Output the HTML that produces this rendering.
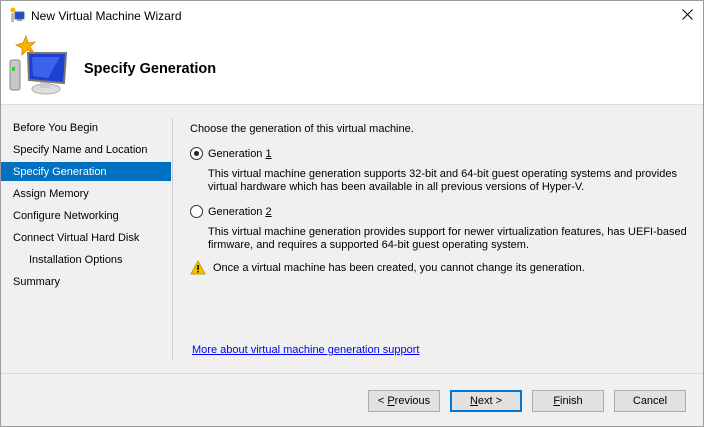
<!DOCTYPE html>
<html><head><style>
*{margin:0;padding:0;box-sizing:border-box}
body{width:704px;height:427px;overflow:hidden;background:#f0f0f0;font-family:"Liberation Sans",sans-serif;font-size:11px;color:#000;position:relative}
.frame{position:absolute;left:0;top:0;width:704px;height:427px;border:1px solid #9a9a9a;border-bottom:1px solid #9a9a9a}
.hdr{position:absolute;left:1px;top:1px;width:702px;height:104px;background:#fff;border-bottom:1px solid #dcdcdc}
.t{position:absolute;white-space:nowrap}
.nav{position:absolute;left:13px;white-space:nowrap}
.sel{position:absolute;left:1px;top:162px;width:170px;height:19px;background:#0070c0}
.vsep{position:absolute;left:172px;top:118px;width:1px;height:243px;background:#cfcfcf}
.hsep{position:absolute;left:1px;top:373px;width:702px;height:1px;background:#d8d8d8}
.btn{position:absolute;top:390px;width:72px;height:22px;background:#e1e1e1;border:1px solid #adadad;text-align:center;line-height:20px}
.radio{position:absolute;width:13px;height:13px;border:1px solid #333;border-radius:50%;background:#fff}
u{text-decoration:underline}
</style></head><body>
<div class="hdr"></div>
<div class="frame"></div>
<svg style="position:absolute;left:9px;top:7px" width="16" height="16" viewBox="0 0 16 16"><circle cx="4" cy="3" r="2.5" fill="#f5b800"/><rect x="2" y="6" width="3" height="9" fill="#bbb"/><rect x="6" y="5" width="9" height="7" fill="#1a4fd6" stroke="#555" stroke-width=".8"/><rect x="8" y="12" width="5" height="2" fill="#999"/></svg>
<div class="t" style="left:31px;top:9px;font-size:12px">New Virtual Machine Wizard</div>
<svg style="position:absolute;left:682px;top:9px" width="11" height="11" viewBox="0 0 11 11"><path d="M0.5 0.5 L10.5 10.5 M10.5 0.5 L0.5 10.5" stroke="#000" stroke-width="1"/></svg>
<svg style="position:absolute;left:8px;top:34px" width="60" height="64" viewBox="0 0 60 64">
<rect x="2" y="26" width="10" height="30" rx="2" fill="#c8c8c8" stroke="#888"/>
<rect x="4" y="33" width="3" height="4" fill="#3c3"/>
<ellipse cx="38" cy="55" rx="14" ry="5" fill="#ddd" stroke="#aaa"/>
<rect x="32" y="44" width="10" height="10" fill="#ccc"/>
<path d="M20 19 L58 19 L56 49 L21 46 Z" fill="#1f3fd0" stroke="#777" stroke-width="2"/>
<path d="M24 23 L52 23 L40 44 L25 42 Z" fill="#4f7cff" opacity=".6"/>
<path d="M18 2 L20 9 L27 8 L22 13 L26 19 L19 16 L14 21 L14 14 L8 11 L15 9 Z" fill="#f5b400" stroke="#e08000" stroke-width=".8"/>
</svg>
<div class="t" style="left:84px;top:61px;font-size:14.5px;font-weight:bold">Specify Generation</div>
<div class="sel"></div>
<div class="nav" style="top:122px">Before You Begin</div>
<div class="nav" style="top:144px">Specify Name and Location</div>
<div class="nav" style="top:166px;color:#fff">Specify Generation</div>
<div class="nav" style="top:188px">Assign Memory</div>
<div class="nav" style="top:210px">Configure Networking</div>
<div class="nav" style="top:232px">Connect Virtual Hard Disk</div>
<div class="nav" style="top:254px;left:29px">Installation Options</div>
<div class="nav" style="top:276px">Summary</div>
<div class="vsep"></div>
<div class="t" style="left:190px;top:123px">Choose the generation of this virtual machine.</div>
<div class="radio" style="left:190px;top:147px"><div style="position:absolute;left:3px;top:3px;width:5px;height:5px;border-radius:50%;background:#222"></div></div>
<div class="t" style="left:208px;top:148px">Generation <u>1</u></div>
<div class="t" style="left:208px;top:168px">This virtual machine generation supports 32-bit and 64-bit guest operating systems and provides</div>
<div class="t" style="left:208px;top:181px">virtual hardware which has been available in all previous versions of Hyper-V.</div>
<div class="radio" style="left:190px;top:205px"></div>
<div class="t" style="left:208px;top:206px">Generation <u>2</u></div>
<div class="t" style="left:208px;top:226px">This virtual machine generation provides support for newer virtualization features, has UEFI-based</div>
<div class="t" style="left:208px;top:239px">firmware, and requires a supported 64-bit guest operating system.</div>
<svg style="position:absolute;left:190px;top:260px" width="16" height="15" viewBox="0 0 16 15"><path d="M8 1 L15 14 L1 14 Z" fill="#f5c400" stroke="#c99a00"/><rect x="7.3" y="5" width="1.5" height="5" fill="#000"/><rect x="7.3" y="11" width="1.5" height="1.5" fill="#000"/></svg>
<div class="t" style="left:213px;top:262px">Once a virtual machine has been created, you cannot change its generation.</div>
<div class="t" style="left:192px;top:344px;color:#0000ff;text-decoration:underline">More about virtual machine generation support</div>
<div class="hsep"></div>
<div class="btn" style="left:368px">&lt; <u>P</u>revious</div>
<div class="btn" style="left:450px;border:2px solid #0078d7;line-height:18px"><u>N</u>ext &gt;</div>
<div class="btn" style="left:532px"><u>F</u>inish</div>
<div class="btn" style="left:614px">Cancel</div>
</body></html>
